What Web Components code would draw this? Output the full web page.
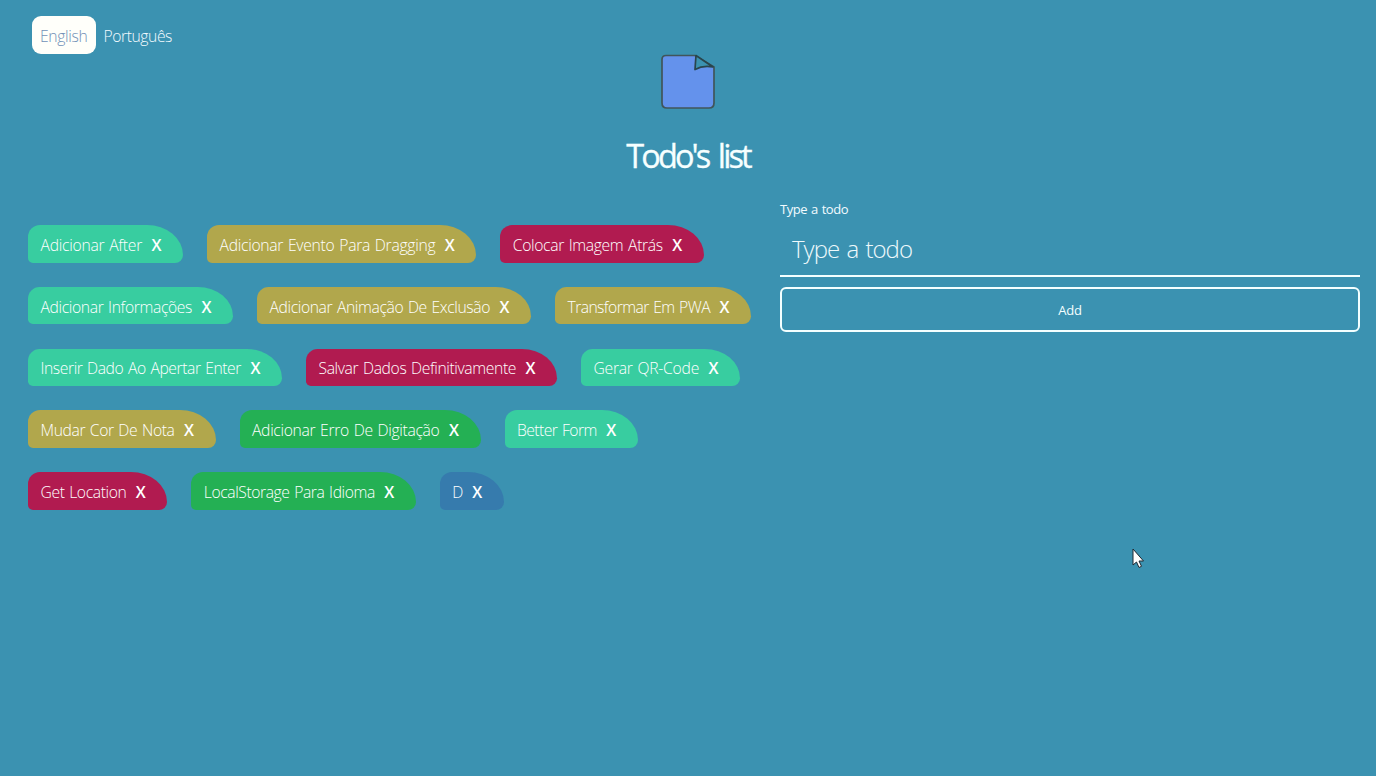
<!DOCTYPE html>
<html lang="en"><head><meta charset="utf-8"><title>Todo's list</title>
<style>
html,body{margin:0;height:100%;overflow:hidden}
body{background:#3b92b1;color:#fff;font-family:"Open Sans","Noto Sans",sans-serif}
</style></head><body>
<todo-app></todo-app>
<script>
const attach=(host,html)=>{const t=document.createElement('template');t.innerHTML=html;host.attachShadow({mode:'open'}).append(t.content.cloneNode(true));return host.shadowRoot;};
/* Fits a label to its design width, whatever face is installed. */
const fit=(el,w)=>{const n=[...el.textContent].length;const cur=el.getBoundingClientRect().width;if(w&&n)el.style.letterSpacing=((w-cur)/n)+'px';};

customElements.define('lang-option',class extends HTMLElement{connectedCallback(){
 const r=attach(this,`<style>:host{display:flex;align-items:center;box-sizing:border-box;height:37.500px;padding:2px 8px 0;border-radius:9px;font-size:15.700px;font-weight:300;color:#f4fbff;white-space:nowrap}:host([active]){background:#fffffa;color:#7190b7}</style><span>${this.getAttribute('label')}</span>`);
 fit(r.querySelector('span'),+this.getAttribute('w'));
}});
customElements.define('note-logo',class extends HTMLElement{connectedCallback(){
 attach(this,`<style>:host{display:block;width:56px;height:56px}svg{display:block}</style>
 <svg width="56" height="56" viewBox="0 0 56 56"><path d="M6 2.500H35L54 14V50Q54 55 49 55H7Q2 55 2 50V6.500Q2 2.500 6 2.500Z" fill="#6492ec" stroke="#41555a" stroke-width="1.700"/><path d="M36 2.500L53 14Q43 12 35 16.500Q35.500 9 36 2.500Z" fill="#3b92b1" stroke="#29454d" stroke-width="1.700" stroke-linejoin="round"/></svg>`);
}});
customElements.define('todo-chip',class extends HTMLElement{connectedCallback(){
 const r=attach(this,`<style>:host{display:flex;align-items:center;box-sizing:border-box;height:37.500px;padding:2px 0 0 12.500px;border-radius:12px 36px 8px 5px / 12px 30px 8px 5px;background:var(--c);font-size:15.700px;font-weight:300;white-space:nowrap;flex:none}
 span{word-spacing:1px}b{font-size:16px;font-weight:600;width:11px;margin-left:9px;text-align:center}</style><span>${this.getAttribute('label')}</span><b>X</b>`);
 const w=+this.getAttribute('w');this.style.width=w+'px';
 fit(r.querySelector('span'),w-53.5);
}});
customElements.define('todo-board',class extends HTMLElement{connectedCallback(){
 const C={t:'#38cda0',y:'#b1a74c',r:'#b11b50',g:'#24b054',b:'#367bad'};
 const rows=[[['Adicionar After','t',155],['Adicionar Evento Para Dragging','y',269.3],['Colocar Imagem Atrás','r',203.5]],
 [['Adicionar Informações','t',205],['Adicionar Animação De Exclusão','y',274],['Transformar Em PWA','y',196]],
 [['Inserir Dado Ao Apertar Enter','t',254],['Salvar Dados Definitivamente','r',251],['Gerar QR-Code','t',159]],
 [['Mudar Cor De Nota','y',187.5],['Adicionar Erro De Digitação','g',241],['Better Form','t',133.3]],
 [['Get Location','r',139.3],['LocalStorage Para Idioma','g',224.5],['D','b',64]]];
 attach(this,`<style>:host{display:flex;flex-direction:column;gap:24.200px;padding:29.300px 0 0 28px}.row{display:flex;gap:24px}</style>${rows.map(a=>`<div class="row">${a.map(([l,c,w])=>`<todo-chip label="${l}" w="${w}" style="--c:${C[c]}"></todo-chip>`).join('')}</div>`).join('')}`);
}});
customElements.define('todo-form',class extends HTMLElement{connectedCallback(){
 const r=attach(this,`<style>:host{display:flex;flex-direction:column}
 label{font-size:13px;line-height:18px;margin-top:4px;color:#f2fbff}
 .field{height:59px;display:flex;align-items:center;box-sizing:border-box;border-bottom:2px solid #f4ffff;padding:3px 12px 0;font-size:24px;font-weight:300;color:#eef9fc}
 button{height:45px;margin:10px 0 0;border:2px solid #f4ffff;border-radius:6px;background:none;color:#f4ffff;font:13px "Open Sans",sans-serif;padding:0}
 span{white-space:nowrap}.l{word-spacing:1px}.p{word-spacing:2px}</style><label><span class="l">Type a todo</span></label><div class="field"><span class="p">Type a todo</span></div><button type="button"><span class="a">Add</span></button>`);
 fit(r.querySelector('.l'),68);fit(r.querySelector('.p'),120);fit(r.querySelector('.a'),23.5);
}});
customElements.define('todo-app',class extends HTMLElement{connectedCallback(){
 const r=attach(this,`<style>:host{display:block;height:776px;position:relative}
 nav{display:flex;padding:16px 0 0 32px;height:37px}
 header{display:flex;flex-direction:column;align-items:center}
 h1{font-size:32.500px;line-height:44px;height:44px;margin:25px 0 0;font-weight:400;white-space:nowrap;color:#f6ffff;-webkit-text-stroke:.3px #f6ffff}
 h1 span{word-spacing:4px}
 main{display:grid;grid-template-columns:780px 580px;margin-top:18px}
 .cursor{position:absolute;left:1132px;top:548px}</style>
 <nav><lang-option active label="English" w="47.5"></lang-option><lang-option label="Português" w="68.5"></lang-option></nav>
 <header><note-logo></note-logo><h1><span>Todo's list</span></h1></header>
 <main><todo-board></todo-board><todo-form></todo-form></main>
 <svg class="cursor" width="13" height="21" viewBox="0 0 13 21"><path d="M1 1V17L4.500 14L7 19.500L9.500 18.300L7 13H11.500Z" fill="#fff" stroke="#202830"/></svg>`);
 fit(r.querySelector('h1 span'),123.5);
}});
</script></body></html>
